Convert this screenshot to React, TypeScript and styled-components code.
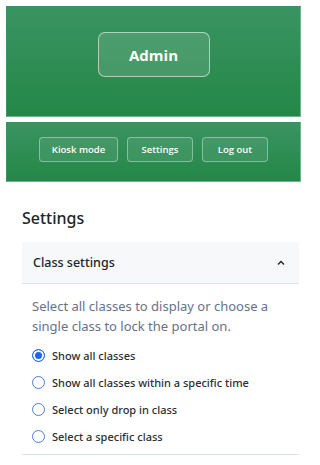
import React, { useState } from 'react';
import styled, { createGlobalStyle } from 'styled-components';

const GlobalStyle = createGlobalStyle`
  html, body {
    margin: 0;
    padding: 0;
    background: #ffffff;
    font-family: "Noto Sans", "Open Sans", Arial, sans-serif;
  }
`;

const Page = styled.div`
  width: 304px;
  display: flex;
  flex-direction: column;
`;

const Banner = styled.div`
  padding: 6px 3px 0 6px;
  display: flex;
  flex-direction: column;
  gap: 5px;
`;

const GreenPanel = styled.div<{ $height: number; $top: number }>`
  height: ${p => p.$height}px;
  box-sizing: border-box;
  padding-top: ${p => p.$top}px;
  display: flex;
  justify-content: center;
  align-items: flex-start;
  gap: 9px;
  background: linear-gradient(180deg, #3a9462 0%, #248747 100%);
  border: 1px solid #6cb48a;
  border-left-color: #3a9462;
  border-top-color: #3a9462;
`;

const AdminButton = styled.button`
  width: 112px;
  height: 45px;
  border-radius: 7px;
  border: 1px solid rgba(255, 255, 255, 0.55);
  background: rgba(255, 255, 255, 0.12);
  color: #ffffff;
  font-family: "Open Sans", "Noto Sans", sans-serif;
  font-size: 15px;
  font-weight: 700;
  cursor: pointer;
`;

const NavButton = styled.button<{ $width: number }>`
  width: ${p => p.$width}px;
  height: 25px;
  border-radius: 4px;
  border: 1px solid rgba(255, 255, 255, 0.38);
  background: rgba(255, 255, 255, 0.08);
  color: #ffffff;
  font-family: "Open Sans", "Noto Sans", sans-serif;
  font-size: 9.5px;
  font-weight: 600;
  padding: 0;
  cursor: pointer;
`;

const Section = styled.section`
  padding: 0 5px 0 22px;
`;

const Heading = styled.h2`
  margin: 27px 0 14px;
  font-size: 16px;
  line-height: 19px;
  font-weight: 500;
  color: #212529;
`;

const AccordionHeader = styled.button`
  width: 100%;
  height: 42px;
  box-sizing: border-box;
  display: flex;
  align-items: center;
  justify-content: space-between;
  padding: 0 14px 0 11px;
  border: none;
  border-bottom: 1px solid #dbe3ec;
  background: #f7f8fa;
  font-family: "Noto Sans", sans-serif;
  font-size: 12.5px;
  font-weight: 500;
  color: #212529;
  cursor: pointer;
`;

const AccordionBody = styled.div`
  padding: 12px 10px 4px;
  border-bottom: 1px solid #dbe3ec;
`;

const Description = styled.p`
  margin: 0 0 6px;
  font-size: 13px;
  line-height: 20px;
  color: #67728a;
`;

const RadioRow = styled.label`
  height: 27px;
  display: flex;
  align-items: center;
  gap: 7px;
  font-size: 11px;
  font-weight: 500;
  color: #2b2f33;
  cursor: pointer;
`;

const RadioDot = styled.span<{ $checked: boolean }>`
  width: 13px;
  height: 13px;
  box-sizing: border-box;
  border-radius: 50%;
  border: 1.2px solid ${p => (p.$checked ? '#1f66e5' : '#4d7fd9')};
  background: ${p => (p.$checked ? '#1f66e5' : '#ffffff')};
  box-shadow: ${p => (p.$checked ? 'inset 0 0 0 2px #ffffff' : 'none')};
  flex-shrink: 0;
`;

const options = [
  'Show all classes',
  'Show all classes within a specific time',
  'Select only drop in class',
  'Select a specific class',
];

export default function App() {
  const [selected, setSelected] = useState(0);
  return (
    <Page>
      <GlobalStyle />
      <Banner>
        <GreenPanel $height={111} $top={25}>
          <AdminButton>Admin</AdminButton>
        </GreenPanel>
        <GreenPanel $height={60} $top={14}>
          <NavButton $width={79}>Kiosk mode</NavButton>
          <NavButton $width={66}>Settings</NavButton>
          <NavButton $width={66}>Log out</NavButton>
        </GreenPanel>
      </Banner>
      <Section>
        <Heading>Settings</Heading>
        <AccordionHeader>
          Class settings
          <svg width="8" height="6" viewBox="0 0 8 6" fill="none">
            <path d="M1 4.5L4 1.5L7 4.5" stroke="#212529" strokeWidth="1.4" />
          </svg>
        </AccordionHeader>
        <AccordionBody>
          <Description>
            Select all classes to display or choose a single class to lock the portal on.
          </Description>
          {options.map((o, i) => (
            <RadioRow key={o} onClick={() => setSelected(i)}>
              <RadioDot $checked={selected === i} />
              {o}
            </RadioRow>
          ))}
        </AccordionBody>
      </Section>
    </Page>
  );
}
